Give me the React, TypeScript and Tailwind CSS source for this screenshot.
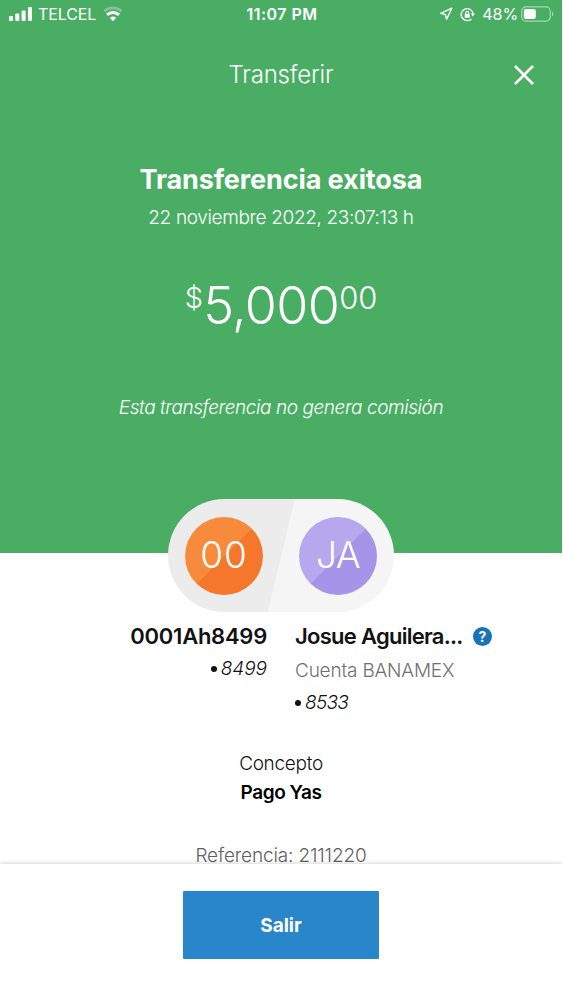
import { Navigation } from 'lucide-react';

function StatusBar() {
  return (
    <div className="flex h-[28px] items-center text-white">
      <div className="flex flex-1 items-center pl-[9px]">
        <svg width="24" height="16" viewBox="0 0 24 16" fill="currentColor">
          <rect x="0" y="10" width="4" height="5" rx="1" />
          <rect x="6.3" y="7.5" width="4" height="7.5" rx="1" />
          <rect x="12.6" y="4.5" width="4" height="10.5" rx="1" />
          <rect x="19" y="1" width="4" height="14" rx="1" />
        </svg>
        <span className="ml-[5px] w-[58px] text-[16px] tracking-[-0.1px]">TELCEL</span>
        <svg className="ml-[7px]" width="20" height="16" viewBox="0 0 20 16" fill="none" stroke="currentColor" strokeWidth="2.6">
          <path d="M1.3 5.2a13 13 0 0 1 17.4 0" opacity=".3" />
          <path d="M4 8.9a8.8 8.8 0 0 1 12 0" strokeWidth="3" />
          <path d="M6.9 12a4.6 4.6 0 0 1 6.2 0L10 15.2z" fill="currentColor" stroke="none" />
        </svg>
      </div>
      <span className="text-[16px] font-semibold tracking-[0.5px]">11:07 PM</span>
      <div className="flex flex-1 items-center justify-end pr-[7px]">
        <Navigation size={14} strokeWidth={2.4} />
        <svg className="ml-[7px]" width="15" height="15" viewBox="0 0 15 15" fill="none" stroke="currentColor" strokeWidth="1.4">
          <path d="M11.4 11.9a6 6 0 1 1 1.8-4.6" />
          <path d="M10.8 6.6h4.2l-2.1 2.8z" fill="currentColor" stroke="none" />
          <rect x="4.7" y="6.8" width="5" height="4" rx=".6" fill="currentColor" stroke="none" />
          <path d="M5.8 7V5.7a1.4 1.4 0 0 1 2.8 0V7" strokeWidth="1.1" />
        </svg>
        <span className="ml-[7px] text-[16px] tracking-[-0.1px]">48%</span>
        <svg className="ml-[3px]" width="34" height="16" viewBox="0 0 34 16" fill="none">
          <rect x=".7" y=".9" width="28.5" height="14.2" rx="4" stroke="white" strokeWidth="1.2" opacity=".5" />
          <rect x="2.8" y="3" width="12" height="10" rx="2" fill="white" />
          <path d="M31 5.5c1.8.8 1.8 4.2 0 5z" fill="white" opacity=".5" />
        </svg>
      </div>
    </div>
  );
}

function Avatar({ initials, className }: { initials: string; className: string }) {
  return (
    <div className={`flex size-[78px] items-center justify-center rounded-full text-[37px] font-light text-white ${className}`}>
      {initials}
    </div>
  );
}

export default function App() {
  return (
    <div className="flex h-[1000px] w-[562px] flex-col overflow-hidden bg-white font-['Inter',sans-serif] whitespace-nowrap text-[#121212]">
      <header className="h-[553px] shrink-0 bg-[#49ae64] text-white">
        <StatusBar />

        <div className="grid h-[93px] grid-cols-[1fr_auto_1fr] items-center">
          <h1 className="col-start-2 text-[24px] font-light tracking-[-0.2px]">Transferir</h1>
          <svg className="mr-[28px] justify-self-end" width="20" height="20" viewBox="0 0 20 20" stroke="currentColor" strokeWidth="2.6">
            <path d="M1 1l18 18M19 1L1 19" />
          </svg>
        </div>

        <div className="flex flex-col items-center">
          <h2 className="mt-[39px] h-[40px] text-[27px] leading-[40px] font-bold tracking-[-0.1px]">Transferencia exitosa</h2>
          <p className="mt-[4px] h-[28px] text-[19px] leading-[28px] font-light tracking-[-0.36px]">22 noviembre 2022, 23:07:13 h</p>
          <p className="mt-[38px] flex h-[72px] items-start font-light">
            <span className="text-[29px] leading-[56px]">$</span>
            <span className="text-[52px] leading-[72px] tracking-[-0.6px]">5,000</span>
            <span className="text-[31px] leading-[56px] tracking-[-0.2px]">00</span>
          </p>
          <p className="mt-[52px] h-[28px] text-[19px] leading-[28px] font-light tracking-[-0.43px] italic">Esta transferencia no genera comisión</p>
        </div>
      </header>

      <main className="flex min-h-0 flex-1 flex-col items-center">
        <div className="relative -mt-[54px] flex h-[113px] w-[226px] shrink-0 items-center justify-between rounded-full bg-[linear-gradient(103.5deg,#ececec_50%,#f5f5f5_50.3%)] px-[17px]">
          <Avatar initials="00" className="bg-[linear-gradient(135deg,#f78b3b_50%,#f4772b_50.5%)] pb-[2px] tracking-[1px]" />
          <Avatar initials="JA" className="bg-[linear-gradient(135deg,#b6a8ee_50%,#a595e8_50.5%)] pb-[2px] tracking-[-0.6px]" />
        </div>

        <div className="mt-[9px] flex w-full shrink-0">
          <div className="flex w-[267px] flex-col items-end">
            <p className="h-[30px] text-[22px] leading-[30px] font-semibold tracking-[-0.25px]">0001Ah8499</p>
            <p className="mt-[4px] flex h-[28px] items-center text-[19px] leading-[28px] font-light italic">
              <span className="mr-[4px] size-[6px] rounded-full bg-[#121212]" />
              8499
            </p>
          </div>
          <div className="ml-[28px]">
            <div className="flex h-[30px] items-center">
              <p className="w-[168px] text-[22px] leading-[30px] font-semibold tracking-[-0.72px]">Josue Aguilera...</p>
              <span className="ml-[10px] flex size-[19px] items-center justify-center rounded-full bg-[#1973b8] text-[14px] font-bold text-white">?</span>
            </div>
            <p className="mt-[6px] h-[28px] text-[19px] leading-[28px] font-light tracking-[-0.2px] text-[#707070]">Cuenta BANAMEX</p>
            <p className="mt-[4px] flex h-[28px] items-center text-[19px] leading-[28px] font-light tracking-[-0.7px] italic">
              <span className="mr-[4px] size-[6px] rounded-full bg-[#121212]" />
              8533
            </p>
          </div>
        </div>

        <p className="mt-[33px] h-[28px] shrink-0 text-[19px] leading-[28px] font-light tracking-[-0.3px]">Concepto</p>
        <p className="mt-px h-[28px] shrink-0 text-[19px] leading-[28px] font-semibold tracking-[-0.45px] text-black">Pago Yas</p>
        <p className="mt-[35px] h-[28px] shrink-0 text-[19px] leading-[28px] font-light tracking-[-0.15px] text-[#606060]">Referencia: 2111220</p>
      </main>

      <footer className="relative flex h-[136px] shrink-0 justify-center bg-white pt-[27px] shadow-[0_-1px_4px_rgba(0,0,0,0.16)]">
        <button className="h-[68px] w-[196px] rounded-[1px] bg-[#2a86ca] pt-[2px] text-[19px] font-bold text-white">Salir</button>
      </footer>
    </div>
  );
}
